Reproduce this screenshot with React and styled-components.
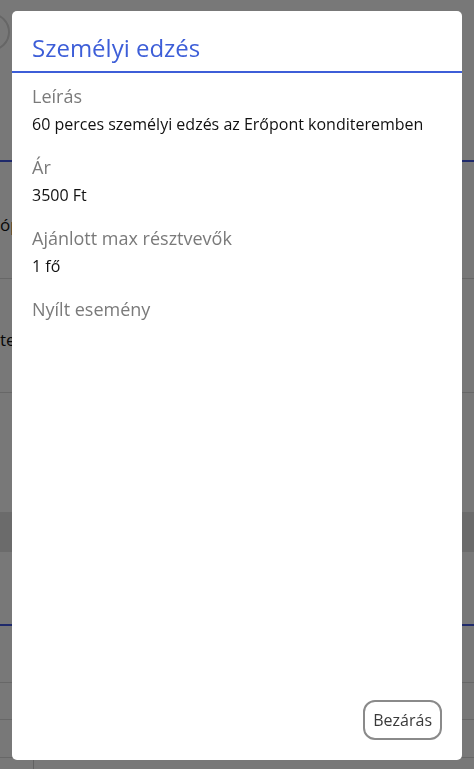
import styled, { createGlobalStyle } from "styled-components";

const GlobalStyle = createGlobalStyle`
  html, body {
    margin: 0;
    padding: 0;
    background: #fff;
    font-family: "Open Sans", "Noto Sans", sans-serif;
  }
  * { box-sizing: border-box; }
`;

/* --- page behind the dialog --- */

const Page = styled.div`
  width: 474px;
  height: 769px;
  overflow: hidden;
  display: flex;
  flex-direction: column;
`;

const TopBar = styled.div`
  height: 162px;
  padding-top: 13px;
  border-bottom: 2px solid #4259e4;
`;

const Avatar = styled.div`
  width: 38px;
  height: 38px;
  margin-left: -28px;
  border-radius: 50%;
  border: 2px solid #d8d8d8;
`;

const ListRow = styled.div`
  height: ${(p) => p.h}px;
  display: flex;
  align-items: center;
  padding-top: ${(p) => p.shift || 0}px;
  border-bottom: 1px solid #dcdcdc;
  font-size: 17px;
  color: #111;
  white-space: nowrap;
`;

const Spacer = styled.div`
  height: ${(p) => p.h}px;
`;

const Band = styled.div`
  height: 40px;
  background: #e4e4e4;
`;

const BlueRule = styled.div`
  height: 2px;
  background: #4259e4;
`;

const Footer = styled.div`
  flex: 1;
  display: flex;
`;

const FooterCell = styled.div`
  width: 34px;
  border-right: 1px solid #cfcfcf;
`;

/* --- dialog --- */

const Overlay = styled.div`
  position: fixed;
  inset: 0;
  background: rgba(0, 0, 0, 0.53);
  padding: 11px 12px 9px;
  display: flex;
`;

const Modal = styled.div`
  flex: 1;
  background: #fff;
  border-radius: 5px;
  display: flex;
  flex-direction: column;
  overflow: hidden;
`;

const Header = styled.div`
  padding: 21px 20px 7px;
  border-bottom: 2px solid #3d5ed8;
`;

const Title = styled.h2`
  margin: 0;
  font-size: 24px;
  line-height: 32px;
  font-weight: 400;
  color: #3d5ed8;
`;

const Body = styled.div`
  flex: 1;
  padding: 11px 20px 0;
  display: flex;
  flex-direction: column;
  gap: 21px;
`;

const Field = styled.div`
  display: flex;
  flex-direction: column;
  gap: 6px;
`;

const Label = styled.div`
  font-size: 18px;
  line-height: 24px;
  color: #7a7a7a;
`;

const Value = styled.div`
  font-size: 16px;
  line-height: 20px;
  color: #111;
`;

const Actions = styled.div`
  display: flex;
  justify-content: flex-end;
  padding: 0 20px 20px;
`;

const CloseButton = styled.button`
  font-family: inherit;
  font-size: 16px;
  line-height: 20px;
  color: #3a3a3a;
  background: #fff;
  border: 2px solid #8a8a8a;
  border-radius: 12px;
  padding: 8px 8px;
  cursor: pointer;
`;

const fields = [
  { label: "Leírás", value: "60 perces személyi edzés az Erőpont konditeremben" },
  { label: "Ár", value: "3500 Ft" },
  { label: "Ajánlott max résztvevők", value: "1 fő" },
  { label: "Nyílt esemény" },
];

export default function App() {
  return (
    <>
      <GlobalStyle />
      <Page>
        <TopBar>
          <Avatar />
        </TopBar>
        <ListRow h={117} shift={8}>óp</ListRow>
        <ListRow h={114} shift={8}>te</ListRow>
        <Spacer h={119} />
        <Band />
        <Spacer h={72} />
        <BlueRule />
        <ListRow h={57} />
        <ListRow h={37} />
        <ListRow h={38} />
        <Footer>
          <FooterCell />
        </Footer>
      </Page>
      <Overlay>
        <Modal>
          <Header>
            <Title>Személyi edzés</Title>
          </Header>
          <Body>
            {fields.map((f) => (
              <Field key={f.label}>
                <Label>{f.label}</Label>
                {f.value && <Value>{f.value}</Value>}
              </Field>
            ))}
          </Body>
          <Actions>
            <CloseButton>Bezárás</CloseButton>
          </Actions>
        </Modal>
      </Overlay>
    </>
  );
}
